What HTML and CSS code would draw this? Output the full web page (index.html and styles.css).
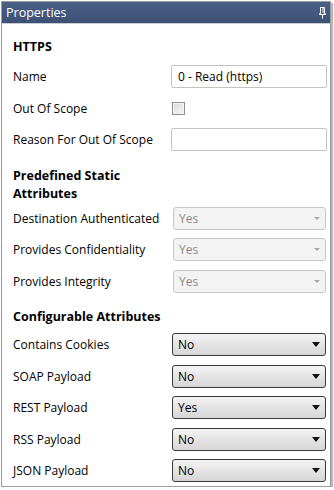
FILE: index.html
```html
<!DOCTYPE html>
<html lang="en">
<head>
  <meta charset="UTF-8">
  <title>Properties</title>
  <link rel="stylesheet" href="styles.css">
</head>
<body>
  <div class="window">
    <div class="titlebar">
      <span class="title">Properties</span>
      <svg class="pin" width="7" height="12" viewBox="0 0 7 12">
        <path d="M1.5 0.5h4v6h1v1h-6v-1h1z" fill="none" stroke="#fff" stroke-width="1"/>
        <path d="M4 1v5" stroke="#fff" stroke-width="1"/>
        <path d="M3.5 7.5v4" stroke="#fff" stroke-width="1"/>
      </svg>
    </div>

    <div class="panel">
      <div class="heading first">HTTPS</div>
      <div class="row">
        <span class="label">Name</span>
        <input class="text" type="text" value="0 - Read (https)">
      </div>
      <div class="row">
        <span class="label">Out Of Scope</span>
        <input class="check" type="checkbox">
      </div>
      <div class="row">
        <span class="label">Reason For Out Of Scope</span>
        <input class="text" type="text" value="">
      </div>

      <div class="heading">Predefined Static Attributes</div>
      <div class="row">
        <span class="label">Destination Authenticated</span>
        <div class="select disabled"><span>Yes</span><i class="arrow"></i></div>
      </div>
      <div class="row">
        <span class="label">Provides Confidentiality</span>
        <div class="select disabled"><span>Yes</span><i class="arrow"></i></div>
      </div>
      <div class="row">
        <span class="label">Provides Integrity</span>
        <div class="select disabled"><span>Yes</span><i class="arrow"></i></div>
      </div>

      <div class="heading single">Configurable Attributes</div>
      <div class="row">
        <span class="label">Contains Cookies</span>
        <div class="select"><span>No</span><i class="arrow"></i></div>
      </div>
      <div class="row">
        <span class="label">SOAP Payload</span>
        <div class="select"><span>No</span><i class="arrow"></i></div>
      </div>
      <div class="row">
        <span class="label">REST Payload</span>
        <div class="select"><span>Yes</span><i class="arrow"></i></div>
      </div>
      <div class="row">
        <span class="label">RSS Payload</span>
        <div class="select"><span>No</span><i class="arrow"></i></div>
      </div>
      <div class="row">
        <span class="label">JSON Payload</span>
        <div class="select"><span>No</span><i class="arrow"></i></div>
      </div>
    </div>
  </div>
</body>
</html>
```
FILE: styles.css
```css
body {
  margin: 0;
  background: #fff;
  font-family: "Open Sans", "Noto Sans", sans-serif;
  font-size: 12px;
  color: #000;
}
.window {
  width: 328px;
  height: 484px;
  margin: 1px 0 0 1px;
  border: 1px solid #9c9c9c;
  box-shadow: 2px 2px 1px #b8b8b8;
  background: #fff;
  overflow: hidden;
}
.titlebar {
  height: 21px;
  background: linear-gradient(#4a5f84, #3c5174);
  border-bottom: 1px solid #c9cdd4;
  display: flex;
  align-items: center;
  justify-content: space-between;
  padding: 0 4px 0 4px;
  color: #fff;
}
.title {
  font-size: 12.5px;
}
.pin {
  margin-top: 1px;
}
.panel {
  padding: 0 3px 0 11px;
}
.heading {
  font-weight: bold;
  font-size: 12.5px;
  line-height: 18px;
  width: 150px;
  margin-top: 11px;
}
.heading.first {
  margin-top: 14px;
  margin-bottom: 5px;
}
.heading.single {
  margin-bottom: 3px;
}
.row {
  height: 31.5px;
  display: grid;
  grid-template-columns: 158px minmax(0, 1fr);
  align-items: center;
}
.text {
  width: 100%;
  min-width: 0;
  height: 23px;
  box-sizing: border-box;
  margin: 0;
  border: 1px solid #c3c3c3;
  border-radius: 2px;
  padding: 0 6px;
  font: inherit;
  color: #000;
  outline: none;
}
.check {
  appearance: none;
  width: 13px;
  height: 13px;
  margin: 0 0 0 1px;
  border: 1px solid #8e8f8f;
  background: linear-gradient(135deg, #dcdcdc, #f6f6f6);
  box-shadow: inset 0 0 0 1px #f4f4f4;
}
.select {
  height: 23px;
  box-sizing: border-box;
  margin: 0 1px 0 1px;
  border: 1px solid #3a3a3a;
  border-radius: 3px;
  background: linear-gradient(#f4f4f4, #e4e4e4 50%, #d6d6d6);
  display: flex;
  align-items: center;
  justify-content: space-between;
  padding: 0 5px 0 5px;
  color: #000;
}
.select.disabled {
  margin-left: 2px;
  border-color: #c6c6c6;
  background: #f3f3f3;
  color: #8c8c8c;
}
.arrow {
  width: 0;
  height: 0;
  border-left: 4px solid transparent;
  border-right: 4px solid transparent;
  border-top: 5px solid #111;
}
.disabled .arrow {
  border-left-width: 3px;
  border-right-width: 3px;
  border-top: 3px solid #a8a8a8;
}
```
